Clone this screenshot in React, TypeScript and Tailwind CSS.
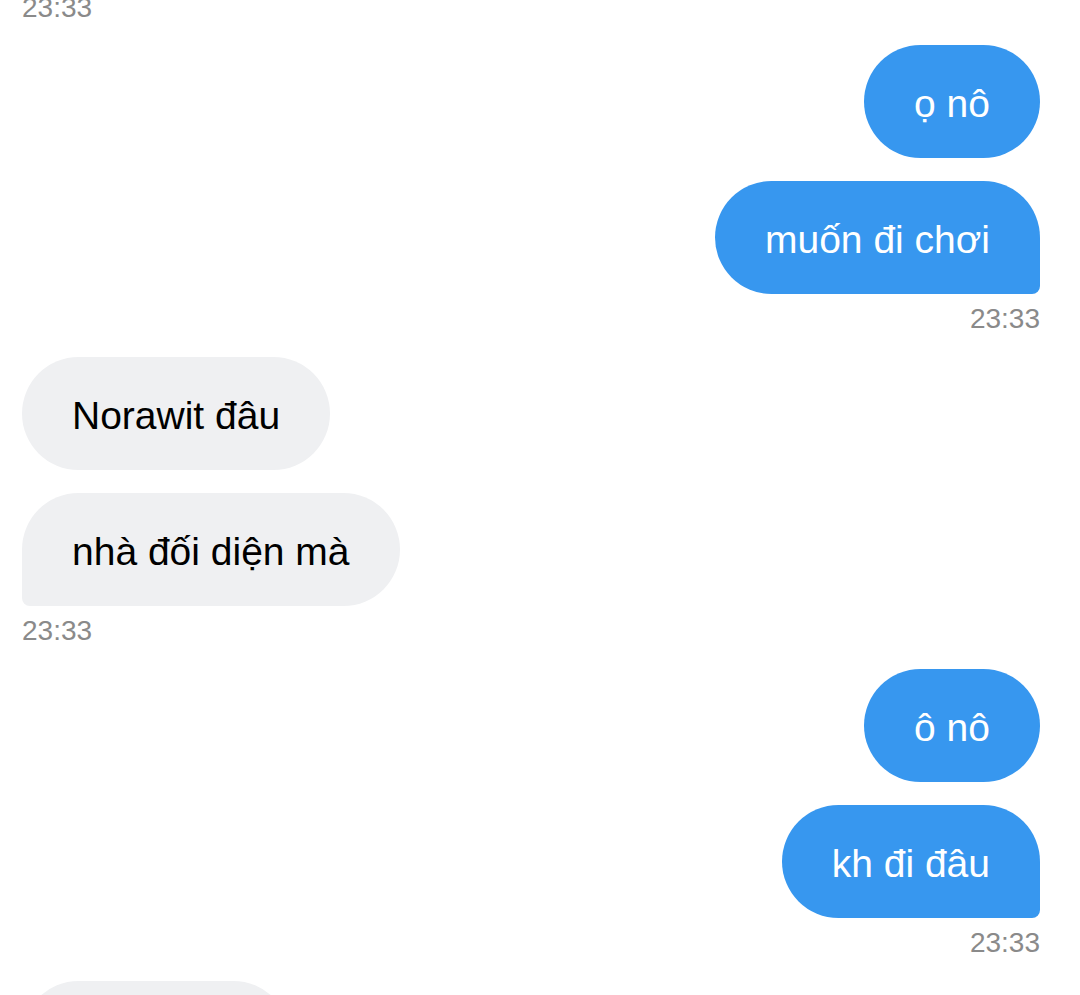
import React from "react";

type Msg =
  | { kind: "ts"; side: "left" | "right" }
  | { kind: "bubble"; side: "left" | "right"; text: string; tail?: boolean; width?: string };

const messages: Msg[] = [
  { kind: "ts", side: "left" },
  { kind: "bubble", side: "right", text: "ọ nô" },
  { kind: "bubble", side: "right", text: "muốn đi chơi", tail: true },
  { kind: "ts", side: "right" },
  { kind: "bubble", side: "left", text: "Norawit đâu" },
  { kind: "bubble", side: "left", text: "nhà đối diện mà", tail: true },
  { kind: "ts", side: "left" },
  { kind: "bubble", side: "right", text: "ô nô" },
  { kind: "bubble", side: "right", text: "kh đi đâu", tail: true },
  { kind: "ts", side: "right" },
  { kind: "bubble", side: "left", text: "", width: "w-[268px]" },
];

function Bubble({ m }: { m: Extract<Msg, { kind: "bubble" }> }) {
  const isRight = m.side === "right";
  const color = isRight ? "bg-[#3797ef] text-white" : "bg-[#eff0f2] text-black";
  const corner = m.tail
    ? isRight
      ? "rounded-[57px] rounded-br-[8px]"
      : "rounded-[57px] rounded-bl-[8px]"
    : "rounded-[57px]";
  return (
    <div className={isRight ? "flex justify-end" : "flex justify-start"}>
      <div
        className={`${color} ${corner} ${m.width ?? ""} h-[113px] px-[50px] pt-[35px] pb-[31px] text-[39px] leading-[47px] whitespace-nowrap`}
      >
        {m.text}
      </div>
    </div>
  );
}

export default function App() {
  return (
    <div
      className="h-[995px] w-[1080px] overflow-hidden bg-white"
      style={{ fontFamily: '"Liberation Sans", Arial, sans-serif' }}
    >
      <div className="mt-[-12px] flex flex-col pl-[22px] pr-[40px]">
        {messages.map((m, i) => {
          if (m.kind === "ts") {
            return (
              <div
                key={i}
                className={`${i === 0 ? "mt-[3px] mb-[20px]" : "mt-[8px] mb-[21px]"} text-[28px] leading-[34px] text-[#8a8a8a] ${
                  m.side === "right" ? "text-right" : "text-left"
                }`}
              >
                23:33
              </div>
            );
          }
          const next = messages[i + 1];
          return (
            <div key={i} className={next && next.kind === "bubble" ? "mb-[23px]" : ""}>
              <Bubble m={m} />
            </div>
          );
        })}
      </div>
    </div>
  );
}
